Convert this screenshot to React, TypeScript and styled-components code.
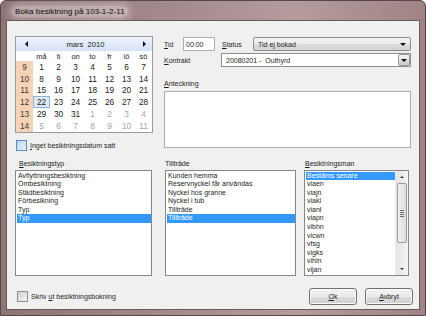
import * as React from "react";
import styled, { createGlobalStyle } from "styled-components";

const GlobalStyle = createGlobalStyle`
  html, body {
    margin: 0;
    padding: 0;
    background: #ffffff;
  }
  body {
    font-family: "Liberation Sans", Arial, sans-serif;
    color: #1e1e1e;
  }
`;

const weeks = [
  { week: 9, days: [1, 2, 3, 4, 5, 6, 7] },
  { week: 10, days: [8, 9, 10, 11, 12, 13, 14] },
  { week: 11, days: [15, 16, 17, 18, 19, 20, 21] },
  { week: 12, days: [22, 23, 24, 25, 26, 27, 28] },
  { week: 13, days: [29, 30, 31, 1, 2, 3, 4] },
  { week: 14, days: [5, 6, 7, 8, 9, 10, 11] },
];
const dayNames = ["må", "ti", "on", "to", "fr", "lö", "sö"];

const typeItems = ["Avflyttningsbesiktning", "Ombesiktning", "Städbesiktning", "Förbesikning", "Typ", "Typ"];
const accessItems = ["Kunden hemma", "Reservnyckel får användas", "Nyckel hos granne", "Nyckel i tub", "Tillträde", "Tillträde"];
const inspectors = ["Bestäms senare", "viaen", "viajn", "viakl", "vianl", "viapn", "vibhn", "vicwn", "vfsg", "vigks", "vihln", "vijan"];

const Frame = styled.div`
  width: 426px;
  height: 316px;
  box-sizing: border-box;
  display: flex;
  flex-direction: column;
  padding: 0 6px 6px 6px;
  border: 1px solid #5a4647;
  border-radius: 6px 6px 0 0;
  background: linear-gradient(90deg, #8f7476 0%, #a2878a 35%, #b59b9c 70%, #9f8385 100%);
`;

const TitleBar = styled.div`
  height: 20px;
  display: flex;
  align-items: center;
  padding-left: 5px;
`;

const Title = styled.span`
  font-size: 8.1px;
  color: #111;
  padding: 1px 3px;
  border-radius: 6px;
  background: rgba(235, 228, 228, 0.45);
  box-shadow: 0 0 6px 3px rgba(235, 228, 228, 0.4);
`;

const Client = styled.div`
  flex: 1;
  display: flex;
  flex-direction: column;
  box-sizing: border-box;
  padding: 15px 6px 4px 8px;
  background: #f0f0f0;
  box-shadow: 0 0 0 1px #6e5a5b;
  font-size: 7px;
`;

const TopSection = styled.div`
  display: flex;
  gap: 11px;
  height: 114px;
`;

const LeftColumn = styled.div`
  display: flex;
  flex-direction: column;
`;

const Calendar = styled.div`
  width: 138px;
  box-sizing: border-box;
  border: 1px solid #9b9b9b;
  background: #fff;
`;

const CalHeader = styled.div`
  height: 14px;
  display: flex;
  align-items: center;
  justify-content: space-between;
  padding: 0 6px 0 9px;
  background: linear-gradient(#edf3fc, #d5e3f6);
`;

const Arrow = styled.span<{ $dir: "left" | "right" }>`
  width: 0;
  height: 0;
  border-top: 3px solid transparent;
  border-bottom: 3px solid transparent;
  ${p => (p.$dir === "left" ? "border-right: 3px solid #111;" : "border-left: 3px solid #111;")}
`;

const MonthTitle = styled.span`
  font-size: 7.6px;
  white-space: pre;
  color: #1a1a1a;
`;

const CalGrid = styled.div`
  display: grid;
  grid-template-columns: repeat(8, 17px);
  grid-template-rows: 10px repeat(6, 11.8px);
`;

const Cell = styled.div<{ $week?: boolean; $muted?: boolean; $today?: boolean; $head?: boolean }>`
  display: flex;
  align-items: center;
  justify-content: center;
  box-sizing: border-box;
  color: ${p => (p.$muted ? "#a3a3a3" : p.$week ? "#3a3a3a" : "#1a1a1a")};
  font-size: ${p => (p.$head ? "7.4px" : "8.3px")};
  background: ${p => (p.$week ? "#f6d3b6" : p.$today ? "#dfeaf8" : "transparent")};
  border: ${p => (p.$today ? "1px solid #8fb1dd" : "none")};
`;

const CheckRow = styled.label<{ $mt?: number; $pl?: number }>`
  display: flex;
  align-items: center;
  gap: 3px;
  margin-top: ${p => p.$mt ?? 0}px;
  padding-left: ${p => p.$pl ?? 0}px;
  font-size: 7px;
`;

const CheckBox = styled.span<{ $hot?: boolean }>`
  width: 11px;
  height: 11px;
  box-sizing: border-box;
  border: 1px solid ${p => (p.$hot ? "#5f8cc0" : "#8e8f8f")};
  background: ${p =>
    p.$hot
      ? "linear-gradient(135deg, #b9d6f2, #e6f1fb)"
      : "linear-gradient(135deg, #cfd1d4, #f4f4f4)"};
`;

const U = styled.span`
  text-decoration: underline;
`;

const RightColumn = styled.div`
  width: 247px;
  padding-top: 1px;
  display: flex;
  flex-direction: column;
`;

const FieldRow = styled.div<{ $mt?: number }>`
  display: flex;
  align-items: center;
  height: 14px;
  margin-top: ${p => p.$mt ?? 0}px;
`;

const FieldLabel = styled.span<{ $w: number; $ml?: number }>`
  width: ${p => p.$w}px;
  margin-left: ${p => p.$ml ?? 0}px;
  font-size: 7px;
`;

const TextBox = styled.div<{ $w: number }>`
  width: ${p => p.$w}px;
  height: 14px;
  box-sizing: border-box;
  border: 1px solid #abadb3;
  background: #fff;
  display: flex;
  align-items: center;
  padding-left: 2px;
`;

const DropDown = styled.div<{ $w: number }>`
  width: ${p => p.$w}px;
  height: 14px;
  box-sizing: border-box;
  display: flex;
  align-items: center;
  justify-content: space-between;
  padding: 0 4px 0 4px;
  border: 1px solid #8b8b8b;
  border-radius: 2px;
  background: linear-gradient(#f3f3f3 0%, #ebebeb 50%, #dedede 50%, #d2d2d2 100%);
`;

const Combo = styled.div<{ $w: number }>`
  width: ${p => p.$w}px;
  height: 14px;
  box-sizing: border-box;
  display: flex;
  align-items: center;
  justify-content: space-between;
  padding-left: 4px;
  border: 1px solid #8d8d8d;
  background: #fff;
`;

const ComboText = styled.span`
  white-space: pre;
`;

const ComboButton = styled.span`
  width: 12px;
  height: 12px;
  box-sizing: border-box;
  display: flex;
  align-items: center;
  justify-content: center;
  border: 1px solid #9a9a9a;
  border-radius: 2px;
  background: linear-gradient(#f3f3f3 0%, #e6e6e6 50%, #d6d6d6 50%, #cdcdcd 100%);
`;

const DownTriangle = styled.span`
  width: 0;
  height: 0;
  border-left: 3px solid transparent;
  border-right: 3px solid transparent;
  border-top: 3px solid #111;
`;

const NoteLabel = styled.div`
  margin-top: 12px;
  line-height: 9px;
  height: 9px;
`;

const NoteBox = styled.div`
  margin-top: 3px;
  height: 57px;
  box-sizing: border-box;
  border: 1px solid #abadb3;
  background: #fff;
`;

const ListsSection = styled.div`
  display: flex;
  margin-top: 10px;
`;

const ListColumn = styled.div<{ $w: number; $ml?: number }>`
  width: ${p => p.$w}px;
  margin-left: ${p => p.$ml ?? 0}px;
  display: flex;
  flex-direction: column;
`;

const ListLabel = styled.div<{ $pl?: number }>`
  height: 10px;
  line-height: 8px;
  padding-left: ${p => p.$pl ?? 0}px;
`;

const ListBox = styled.div`
  height: 106px;
  box-sizing: border-box;
  border: 1px solid #828790;
  background: #fff;
  display: flex;
  overflow: hidden;
`;

const ListItems = styled.div`
  flex: 1;
  padding-top: 0.5px;
`;

const ListItem = styled.div<{ $selected?: boolean }>`
  height: 8.6px;
  line-height: 8.6px;
  padding-left: 1px;
  margin-left: 1px;
  white-space: nowrap;
  overflow: hidden;
  color: ${p => (p.$selected ? "#fff" : "#1e1e1e")};
  background: ${p => (p.$selected ? "#3399ff" : "transparent")};
`;

const ScrollBar = styled.div`
  width: 12px;
  display: flex;
  flex-direction: column;
  align-items: center;
  background: linear-gradient(90deg, #e4e4e4, #f4f4f4);
  border-left: 1px solid #ececec;
`;

const ScrollArrow = styled.span<{ $up?: boolean }>`
  height: 12px;
  display: flex;
  align-items: center;
  justify-content: center;

  &::after {
    content: "";
    width: 0;
    height: 0;
    border-left: 2.5px solid transparent;
    border-right: 2.5px solid transparent;
    ${p => (p.$up ? "border-bottom: 2.5px solid #333;" : "border-top: 2.5px solid #333;")}
  }
`;

const Thumb = styled.span`
  width: 10px;
  height: 60px;
  box-sizing: border-box;
  border: 1px solid #9b9b9b;
  border-radius: 2px;
  background: linear-gradient(90deg, #f2f2f2, #dcdcdc);
  display: flex;
  flex-direction: column;
  align-items: center;
  justify-content: center;
  gap: 1px;
`;

const Grip = styled.span`
  width: 4px;
  height: 1px;
  background: #6d6d6d;
`;

const ScrollTrack = styled.span`
  flex: 1;
`;

const BottomRow = styled.div`
  display: flex;
  align-items: center;
  margin-top: 12px;
  height: 17px;
`;

const Spacer = styled.div`
  flex: 1;
`;

const ButtonGroup = styled.div`
  display: flex;
  gap: 8px;
`;

const Button = styled.div`
  width: 48px;
  height: 17px;
  box-sizing: border-box;
  display: flex;
  align-items: center;
  justify-content: center;
  border: 1px solid #707070;
  border-radius: 3px;
  box-shadow: inset 0 0 0 1px #fbfbfb;
  background: linear-gradient(#f2f2f2 0%, #ebebeb 50%, #dddddd 50%, #cfcfcf 100%);
  font-size: 7px;
`;

const App = (): JSX.Element => {
  return (
    <>
      <GlobalStyle />
      <Frame>
        <TitleBar>
          <Title>Boka besiktning på 103-1-2-11</Title>
        </TitleBar>
        <Client>
          <TopSection>
            <LeftColumn>
              <Calendar>
                <CalHeader>
                  <Arrow $dir="left" />
                  <MonthTitle>mars  2010</MonthTitle>
                  <Arrow $dir="right" />
                </CalHeader>
                <CalGrid>
                  <Cell $head />
                  {dayNames.map(d => (
                    <Cell key={d} $head>
                      {d}
                    </Cell>
                  ))}
                  {weeks.map((w, wi) => (
                    <React.Fragment key={w.week}>
                      <Cell $week>{w.week}</Cell>
                      {w.days.map((d, di) => {
                        const muted = (wi === 4 && di >= 3) || wi === 5;
                        const today = wi === 3 && di === 0;
                        return (
                          <Cell key={di} $muted={muted} $today={today}>
                            {d}
                          </Cell>
                        );
                      })}
                    </React.Fragment>
                  ))}
                </CalGrid>
              </Calendar>
              <CheckRow $mt={7} $pl={1}>
                <CheckBox $hot />
                <span>
                  <U>I</U>nget besiktningsdatum satt
                </span>
              </CheckRow>
            </LeftColumn>

            <RightColumn>
              <FieldRow>
                <FieldLabel $w={19}>
                  <U>T</U>id
                </FieldLabel>
                <TextBox $w={32}>00:00</TextBox>
                <FieldLabel $w={31} $ml={7}>
                  <U>S</U>tatus
                </FieldLabel>
                <DropDown $w={158}>
                  <span>Tid ej bokad</span>
                  <DownTriangle />
                </DropDown>
              </FieldRow>
              <FieldRow $mt={2}>
                <FieldLabel $w={57}>
                  <U>K</U>ontrakt
                </FieldLabel>
                <Combo $w={190}>
                  <ComboText>20080201 -  Outhyrd</ComboText>
                  <ComboButton>
                    <DownTriangle />
                  </ComboButton>
                </Combo>
              </FieldRow>
              <NoteLabel>
                <U>A</U>nteckning
              </NoteLabel>
              <NoteBox />
            </RightColumn>
          </TopSection>

          <ListsSection>
            <ListColumn $w={137}>
              <ListLabel $pl={4}>
                <U>B</U>esiktningstyp
              </ListLabel>
              <ListBox>
                <ListItems>
                  {typeItems.map((t, i) => (
                    <ListItem key={i} $selected={i === typeItems.length - 1}>
                      {t}
                    </ListItem>
                  ))}
                </ListItems>
              </ListBox>
            </ListColumn>
            <ListColumn $w={131} $ml={13}>
              <ListLabel>Tillträde</ListLabel>
              <ListBox>
                <ListItems>
                  {accessItems.map((t, i) => (
                    <ListItem key={i} $selected={i === accessItems.length - 1}>
                      {t}
                    </ListItem>
                  ))}
                </ListItems>
              </ListBox>
            </ListColumn>
            <ListColumn $w={105} $ml={8}>
              <ListLabel $pl={1}>
                <U>B</U>esiktningsman
              </ListLabel>
              <ListBox>
                <ListItems>
                  {inspectors.map((t, i) => (
                    <ListItem key={i} $selected={i === 0}>
                      {t}
                    </ListItem>
                  ))}
                </ListItems>
                <ScrollBar>
                  <ScrollArrow $up />
                  <Thumb>
                    <Grip />
                    <Grip />
                    <Grip />
                    <Grip />
                  </Thumb>
                  <ScrollTrack />
                  <ScrollArrow />
                </ScrollBar>
              </ListBox>
            </ListColumn>
          </ListsSection>

          <BottomRow>
            <CheckRow $pl={2}>
              <CheckBox />
              <span>
                Skriv <U>u</U>t besiktningsbokning
              </span>
            </CheckRow>
            <Spacer />
            <ButtonGroup>
              <Button>
                <span>
                  <U>O</U>k
                </span>
              </Button>
              <Button>
                <span>
                  <U>A</U>vbryt
                </span>
              </Button>
            </ButtonGroup>
          </BottomRow>
        </Client>
      </Frame>
    </>
  );
};

export default App;
